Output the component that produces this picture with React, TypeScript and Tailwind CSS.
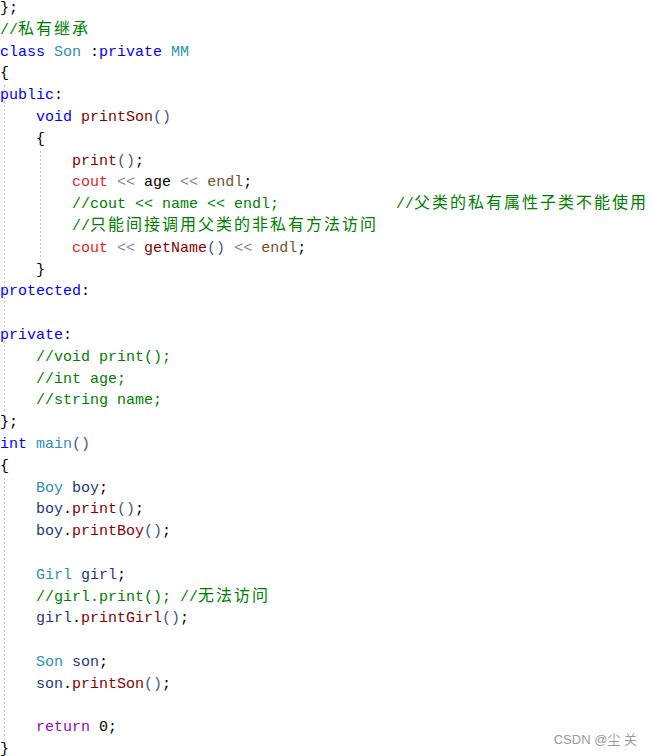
import type { ReactNode } from 'react';

type Tok = [string, string];

const KW = 'text-[#0000ff]';
const TY = 'text-[#2b91af]';
const FN = 'text-[#880000]';
const CO = 'text-[#e8232b]';
const OP = 'text-[#8484a4]';
const EN = 'text-[#74531f]';
const VR = 'text-[#1f377f]';
const PA = 'text-[#3c5a88]';
const CM = 'text-[#008000]';
const RT = 'text-[#8f08c4]';
const TX = 'text-black';

const lines: Tok[][] = [
  [['};', TX]],
  [['//私有继承', CM]],
  [['class', KW], [' ', TX], ['Son', TY], [' :', TX], ['private', KW], [' ', TX], ['MM', TY]],
  [['{', TX]],
  [['public', KW], [':', TX]],
  [['    ', TX], ['void', KW], [' ', TX], ['printSon', FN], ['()', PA]],
  [['    {', TX]],
  [['        ', TX], ['print', FN], ['()', PA], [';', TX]],
  [
    ['        ', TX], ['cout', CO], [' ', TX], ['<<', OP], [' ', TX], ['age', TX],
    [' ', TX], ['<<', OP], [' ', TX], ['endl', EN], [';', TX],
  ],
  [['        //cout << name << endl;             //父类的私有属性子类不能使用', CM]],
  [['        //只能间接调用父类的非私有方法访问', CM]],
  [
    ['        ', TX], ['cout', CO], [' ', TX], ['<<', OP], [' ', TX], ['getName', FN],
    ['()', PA], [' ', TX], ['<<', OP], [' ', TX], ['endl', EN], [';', TX],
  ],
  [['    }', TX]],
  [['protected', KW], [':', TX]],
  [],
  [['private', KW], [':', TX]],
  [['    //void print();', CM]],
  [['    //int age;', CM]],
  [['    //string name;', CM]],
  [['};', TX]],
  [['int', KW], [' ', TX], ['main', TY], ['()', PA]],
  [['{', TX]],
  [['    ', TX], ['Boy', TY], [' ', TX], ['boy', VR], [';', TX]],
  [['    ', TX], ['boy', VR], ['.', TX], ['print', FN], ['()', PA], [';', TX]],
  [['    ', TX], ['boy', VR], ['.', TX], ['printBoy', FN], ['()', PA], [';', TX]],
  [],
  [['    ', TX], ['Girl', TY], [' ', TX], ['girl', VR], [';', TX]],
  [['    //girl.print(); //无法访问', CM]],
  [['    ', TX], ['girl', VR], ['.', TX], ['printGirl', FN], ['()', PA], [';', TX]],
  [],
  [['    ', TX], ['Son', TY], [' ', TX], ['son', VR], [';', TX]],
  [['    ', TX], ['son', VR], ['.', TX], ['printSon', FN], ['()', PA], [';', TX]],
  [],
  [['    ', TX], ['return', RT], [' ', TX], ['0', TX], [';', TX]],
  [['}', TX]],
];

const renderText = (text: string) =>
  text.split(/([\u4e00-\u9fff]+)/).map((part, i) =>
    /[\u4e00-\u9fff]/.test(part) ? (
      <span key={i} className="text-[16px] tracking-[2px]">
        {part}
      </span>
    ) : (
      part
    )
  );

const CodeLine = ({ tokens }: { tokens: Tok[] }) => (
  <div className="relative h-[21.8px] leading-[21.8px] whitespace-pre">
    {tokens.map(([text, color], i) => (
      <span key={i} className={color}>
        {renderText(text)}
      </span>
    ))}
  </div>
);

const Guide = ({ left, children }: { left: 'outer' | 'inner'; children: ReactNode }) => (
  <div className="relative">
    <div
      className={
        (left === 'outer' ? 'left-[4px]' : 'left-[40px]') +
        ' absolute top-0 bottom-0 w-px bg-[linear-gradient(to_bottom,#c4c4c4_50%,transparent_50%)] bg-[length:1px_4px]'
      }
    />
    {children}
  </div>
);

const range = (from: number, to: number) =>
  lines.slice(from, to + 1).map((tokens, i) => <CodeLine key={from + i} tokens={tokens} />);

export default function App() {
  return (
    <div className="relative w-[654px] h-[756px] overflow-hidden bg-white">
      <div className="-mt-[2px] flex flex-col text-[15px] font-['Liberation_Mono','Noto_Sans_CJK_SC',monospace]">
        {range(0, 3)}
        <Guide left="outer">
          {range(4, 6)}
          <Guide left="inner">{range(7, 11)}</Guide>
          {range(12, 18)}
        </Guide>
        {range(19, 21)}
        <Guide left="outer">{range(22, 33)}</Guide>
        {range(34, 34)}
      </div>

      <div className="absolute right-[17px] bottom-[7px] text-[13px] text-[#9a9a9a] font-['Liberation_Sans','Noto_Sans_CJK_SC',sans-serif]">
        CSDN @尘 关
      </div>
    </div>
  );
}
